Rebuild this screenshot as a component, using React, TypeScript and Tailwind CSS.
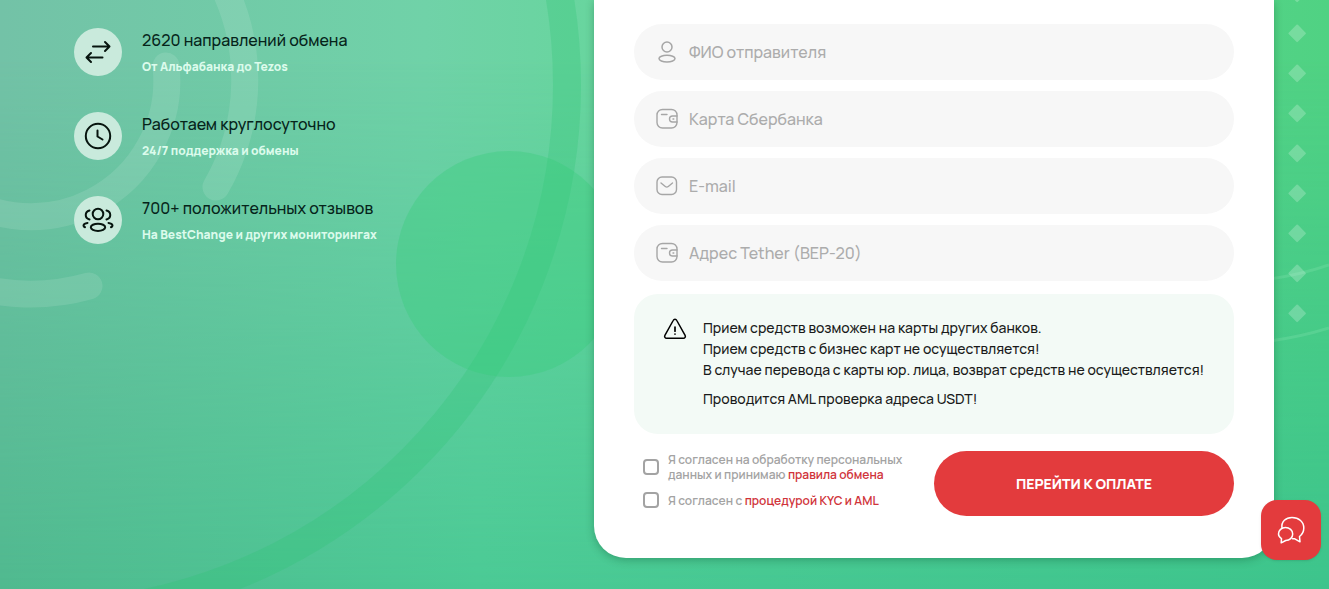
import type { ReactNode } from 'react'

type IconProps = { className?: string }

function Svg({ className, children, box = 24 }: IconProps & { children: ReactNode; box?: number }) {
  return (
    <svg
      className={className}
      viewBox={`0 0 ${box} ${box}`}
      fill="none"
      stroke="currentColor"
      strokeLinecap="round"
      strokeLinejoin="round"
      aria-hidden="true"
    >
      {children}
    </svg>
  )
}

const ArrowsIcon = () => (
  <Svg className="w-8 h-8" box={32}>
    <path strokeWidth="2" d="M11 10.500h16.500M23 6l4.500 4.500L23 15M20.500 21.500H4.500M9 17l-4.500 4.500L9 26" />
  </Svg>
)

const ClockIcon = () => (
  <Svg className="w-8 h-8" box={32}>
    <circle cx="16" cy="16" r="12.2" strokeWidth="2" />
    <path strokeWidth="2" d="M15.500 10.500v6l5 3" />
  </Svg>
)

const PeopleIcon = () => (
  <Svg className="w-8 h-8" box={32}>
    <g strokeWidth="2">
      <circle cx="16" cy="10" r="5.300" />
      <ellipse cx="16" cy="23.300" rx="7.200" ry="3.600" />
      <path d="M7.500 6.500c-5 1.500-5 7.500 0 9M24.500 6.500c5 1.500 5 7.500 0 9M5.500 19c-5 .8-4.500 3.500-2.500 4.200M26.500 19c5 .8 4.500 3.500 2.500 4.200" />
    </g>
  </Svg>
)

const UserIcon = ({ className }: IconProps) => (
  <Svg className={className}>
    <circle cx="12" cy="7" r="5" strokeWidth="1.500" />
    <ellipse cx="12" cy="18.600" rx="8" ry="3.400" strokeWidth="1.500" />
  </Svg>
)

const WalletIcon = ({ className }: IconProps) => (
  <Svg className={className}>
    <rect x="2" y="2.500" width="20" height="18.500" rx="5.500" strokeWidth="1.400" />
    <path strokeWidth="1.400" d="M6.500 7.500h5.500M22 9h-4.500a3 3 0 0 0 0 6H22M18 12h.8" />
  </Svg>
)

const MailIcon = ({ className }: IconProps) => (
  <Svg className={className}>
    <rect x="2" y="3" width="19.500" height="17.500" rx="5" strokeWidth="1.400" />
    <path strokeWidth="1.400" d="M6 9l4.300 3.500a2.400 2.400 0 0 0 3 0L17.500 9" />
  </Svg>
)

const AlertIcon = ({ className }: IconProps) => (
  <Svg className={className}>
    <path strokeWidth="1.500" d="M10.200 3.500a2 2 0 0 1 3.600 0l8.300 14.800a2 2 0 0 1-1.800 3H3.700a2 2 0 0 1-1.800-3z" />
    <path strokeWidth="1.700" d="M12 10v4.200M12 17v.1" />
  </Svg>
)

const ChatIcon = ({ className }: IconProps) => (
  <Svg className={className} box={32}>
    <g strokeWidth="1.500">
      <path d="M7 14.200C6 7.500 11 3.500 17 3.500c7 0 11.800 4.500 11.800 10.500 0 3.700-1.600 6.500-4.300 8.500l.5 5.300-5.200-3h-2.300" />
      <path d="M10.500 13.500c4 0 7.200 2.900 7.200 6.500s-3 6.500-7 6.500l-4.500 2.300.3-4.200C4.500 23.300 3.500 22 3.500 20c0-3.600 3-6.500 7-6.500z" />
    </g>
  </Svg>
)

const features = [
  { icon: ArrowsIcon, title: '2620 направлений обмена', text: 'От Альфабанка до Tezos' },
  { icon: ClockIcon, title: 'Работаем круглосуточно', text: '24/7 поддержка и обмены' },
  { icon: PeopleIcon, title: '700+ положительных отзывов', text: 'На BestChange и других мониторингах' },
]

const fields = [
  { id: 'sender', type: 'text', icon: UserIcon, label: 'ФИО отправителя' },
  { id: 'card', type: 'text', icon: WalletIcon, label: 'Карта Сбербанка' },
  { id: 'email', type: 'email', icon: MailIcon, label: 'E-mail' },
  { id: 'address', type: 'text', icon: WalletIcon, label: 'Адрес Tether (BEP-20)' },
]

const diamonds = [-7, 33, 73, 113, 153, 193, 233, 273, 313]

function Backdrop() {
  return (
    <div className="absolute inset-0 overflow-hidden bg-[linear-gradient(to_right,#73c2a7,#70d2a8_32%,#66d69c_48%,#50d283)]" aria-hidden="true">
      <div className="absolute inset-0 bg-[linear-gradient(to_right,#50b98f,#4bca95_36%,#3dc48c)] [mask-image:linear-gradient(to_bottom,transparent_10%,black)]" />
      <svg className="absolute left-0 top-0" width="640" height="640" fill="none">
        <circle cx="38" cy="85" r="529" stroke="#2cc573" strokeOpacity="0.27" strokeWidth="28" />
        <circle cx="509" cy="264" r="113" fill="#34cc78" fillOpacity="0.34" />
        <g stroke="#ffffff" strokeOpacity="0.11" strokeWidth="27" strokeLinecap="round">
          <path d="M166 66A136 136 0 0 1 -60 182" />
          <path d="M220 -20A214 214 0 0 1 216 187" />
          <path d="M89 286A214 214 0 0 1 -40 282" />
        </g>
      </svg>
      <svg className="absolute right-0 top-0" width="75" height="400" fill="none">
        <path d="M0 281Q40 277 75 265M0 343Q40 339 75 328" stroke="#8be6b4" strokeOpacity="0.25" strokeWidth="3" />
        {diamonds.map((y) => (
          <rect
            key={y}
            x="37"
            y={y - 6}
            width="13"
            height="13"
            rx="1"
            transform={`rotate(45 43.5 ${y})`}
            fill="#ffffff"
            fillOpacity="0.22"
          />
        ))}
      </svg>
    </div>
  )
}

export default function App() {
  return (
    <div className="relative min-h-screen font-['Manrope','Inter',sans-serif]">
      <Backdrop />

      <main className="relative flex items-start justify-between gap-8 pl-[74px] pr-[55px]">
        {/* Features */}
        <ul className="flex flex-col gap-9 pt-7">
          {features.map(({ icon: Icon, title, text }) => (
            <li key={title} className="flex h-12 gap-5">
              <div className="w-12 h-12 shrink-0 rounded-full bg-[#c9eadc] flex items-center justify-center text-[#06140e]">
                <Icon />
              </div>
              <div>
                <h3 className="text-base leading-6 font-medium text-[#06241a]">{title}</h3>
                <p className="mt-[5px] text-xs leading-5 font-extrabold text-[#dcfbec]">{text}</p>
              </div>
            </li>
          ))}
        </ul>

        {/* Exchange form */}
        <form className="w-[680px] bg-white rounded-b-[32px] px-10 pt-6 pb-[42px] shadow-[0_2px_8px_rgba(0,60,30,0.3)]">
          <div className="flex flex-col gap-[11px]">
            {fields.map(({ id, type, icon: Icon, label }) => (
              <div key={id} className="relative">
                <label htmlFor={id} aria-label={label} className="absolute left-[21px] top-4 text-[#a6a6a6]">
                  <Icon className="w-6 h-6" />
                </label>
                <input
                  id={id}
                  type={type}
                  placeholder={label}
                  className="block w-full h-14 rounded-full bg-[#f7f7f7] pl-[55px] pr-6 text-base font-medium text-black placeholder:text-[#acacac] outline-none"
                />
              </div>
            ))}
          </div>

          {/* Notice */}
          <div className="mt-[13px] flex gap-4 rounded-3xl bg-[#f3faf6] pl-[29px] pr-4 pt-[23px] pb-[25px] text-sm leading-[21px] font-medium text-[#1a1a1a]">
            <AlertIcon className="w-6 h-6 shrink-0 text-black" />
            <div>
              <p>Прием средств возможен на карты других банков.</p>
              <p>Прием средств с бизнес карт не осуществляется!</p>
              <p className="whitespace-nowrap">В случае перевода с карты юр. лица, возврат средств не осуществляется!</p>
              <p className="mt-2">Проводится AML проверка адреса USDT!</p>
            </div>
          </div>

          <div className="mt-[17px] flex justify-between">
            <div className="flex flex-col gap-2.5 pl-[9px] pt-px text-xs leading-[15px] font-semibold text-[#a3a3a3]">
              <div className="flex items-center gap-[9px]">
                <input id="terms" type="checkbox" className="appearance-none w-4 h-4 shrink-0 border-2 border-[#a3a3a3] rounded checked:bg-[#e33b3d]" />
                <label htmlFor="terms">
                  Я согласен на обработку персональных
                  <br />
                  данных и принимаю <a href="#rules" className="text-[#d0333a]">правила обмена</a>
                </label>
              </div>
              <div className="flex items-center gap-[9px]">
                <input id="kyc" type="checkbox" className="appearance-none w-4 h-4 shrink-0 border-2 border-[#a3a3a3] rounded checked:bg-[#e33b3d]" />
                <label htmlFor="kyc">
                  Я согласен с <a href="#kyc-aml" className="text-[#d0333a]">процедурой KYC и AML</a>
                </label>
              </div>
            </div>
            <button type="submit" className="w-[300px] h-[65px] shrink-0 rounded-full bg-[#e33b3d] text-sm font-extrabold text-white">
              ПЕРЕЙТИ К ОПЛАТЕ
            </button>
          </div>
        </form>
      </main>

      {/* Support chat */}
      <button
        type="button"
        aria-label="Чат поддержки"
        className="fixed right-2 bottom-[29px] w-15 h-15 rounded-2xl bg-[#e33b3d] text-white flex items-center justify-center shadow"
      >
        <ChatIcon className="w-8 h-8" />
      </button>
    </div>
  )
}
